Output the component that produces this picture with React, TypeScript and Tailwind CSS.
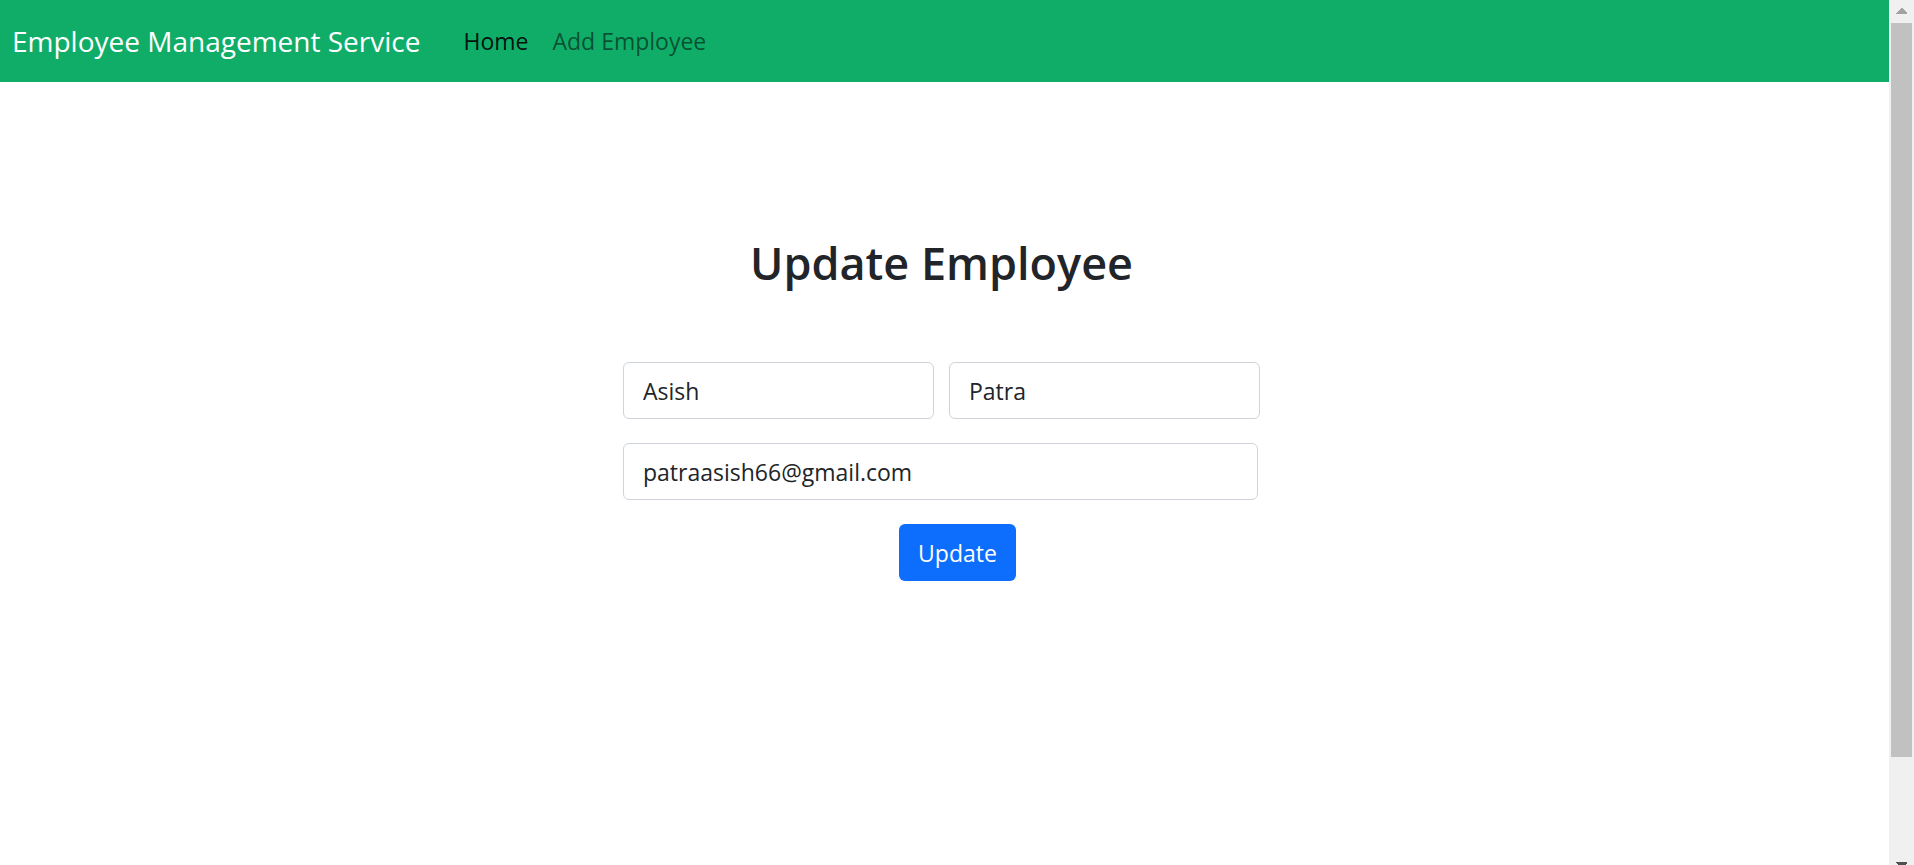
import { useState } from "react";
import type { InputHTMLAttributes } from "react";

function Field({ label, className, ...rest }: { label: string; className: string } & InputHTMLAttributes<HTMLInputElement>) {
  return (
    <div className={className}>
      <input
        aria-label={label}
        {...rest}
        className="block h-[57px] w-full rounded-md border border-[#ced4da] bg-white px-[19px] text-[23px] text-[#212529] outline-none focus:border-[#86b7fe]"
      />
    </div>
  );
}

function Navbar() {
  return (
    <nav className="flex h-[82px] items-center bg-[#10ad69] px-3">
      <a href="#home" className="text-[28px] leading-9 text-white">
        Employee Management Service
      </a>
      <ul className="ml-[43px] flex gap-6 text-[23px] leading-9">
        <li>
          <a href="#home" aria-current="page" className="text-black/90">
            Home
          </a>
        </li>
        <li>
          <a href="#add" className="text-black/55">
            Add Employee
          </a>
        </li>
      </ul>
    </nav>
  );
}

function UpdateForm() {
  const [first, setFirst] = useState("Asish");
  const [last, setLast] = useState("Patra");
  const [email, setEmail] = useState("patraasish66@gmail.com");
  return (
    <form className="mt-[70px] flex w-[637px] flex-col gap-6" onSubmit={(e) => e.preventDefault()}>
      <div className="flex gap-[15px]">
        <Field label="First name" className="flex-1" value={first} onChange={(e) => setFirst(e.target.value)} />
        <Field label="Last name" className="flex-1" value={last} onChange={(e) => setLast(e.target.value)} />
      </div>
      <Field label="Email" type="email" className="mr-0.5" value={email} onChange={(e) => setEmail(e.target.value)} />
      <button type="submit" className="ml-8 h-[57px] w-[117px] self-center rounded-md bg-[#0d6efd] pt-0.5 text-[23px] text-white">
        Update
      </button>
    </form>
  );
}

function ScrollTrack() {
  return (
    <div aria-hidden="true" className="flex w-[25px] shrink-0 flex-col bg-[#f0f0f0] px-0.5">
      <svg viewBox="0 0 21 23" className="h-[23px] w-[21px]" shapeRendering="crispEdges">
        <path d="M5 14V13L10 8H11L16 13V14Z" fill="#a3a3a3" />
      </svg>
      <div className="w-[21px] grow-[7] basis-0 bg-[#c1c1c1]" />
      <div className="grow basis-0" />
      <svg viewBox="0 0 21 3" className="h-[3px] w-[21px]" shapeRendering="crispEdges">
        <path d="M5 0H16V1L14 3H7L5 1Z" fill="#505050" />
      </svg>
    </div>
  );
}

export default function App() {
  return (
    <div className="flex h-screen bg-white font-['Segoe_UI','Open_Sans',sans-serif]">
      <div className="min-w-0 flex-1 overflow-hidden">
        <Navbar />
        <main className="flex flex-col items-center pt-[152px] pr-1.5">
          <h1 className="text-[45px] leading-[58px] font-semibold text-[#212529]">Update Employee</h1>
          <UpdateForm />
        </main>
      </div>
      <ScrollTrack />
    </div>
  );
}
